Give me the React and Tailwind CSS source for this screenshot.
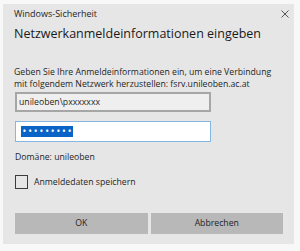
export default function App() {
  return (
    <div className="w-[300px] h-[251px] bg-[#f8f8f8] pt-[4px] pl-[3px]" style={{ fontFamily: '"Open Sans", "Noto Sans", sans-serif' }}>
      <div className="w-[291px] h-[240px] bg-[#e6e6e6] flex flex-col px-[11px] text-[#1f1f1f]">
        <div className="flex items-center justify-between h-[20px]">
          <span className="text-[9px] leading-[12px]">Windows-Sicherheit</span>
          <svg width="8" height="8" viewBox="0 0 8 8" className="-mr-[6px] -mt-[1px]">
            <path d="M0.5 0.5 L7.5 7.5 M7.5 0.5 L0.5 7.5" stroke="#555" strokeWidth="1" />
          </svg>
        </div>
        <h1 className="text-[12.5px] leading-[14px] mt-[3px] text-[#1a1a1a]">Netzwerkanmeldeinformationen eingeben</h1>
        <p className="text-[8.7px] leading-[12px] mt-[25px]">
          Geben Sie Ihre Anmeldeinformationen ein, um eine Verbindung
          <br />
          mit folgendem Netzwerk herzustellen: fsrv.unileoben.ac.at
        </p>
        <div className="mt-[2px] ml-[1px] w-[196px] h-[20px] border-2 border-[#a6a6a6] bg-[#efefef] flex items-center px-[2px] text-[8.7px] leading-[12px]">
          unileoben\pxxxxxxx
        </div>
        <div className="mt-[9px] ml-[1px] w-[196px] h-[21px] border-[1.5px] border-[#86b6e2] bg-white flex items-center px-[5px]">
          <span className="bg-[#0a64c8] text-white text-[10px] leading-[11px] h-[11px] flex items-center pl-[1.5px] tracking-[1.9px]">•••••••••</span>
        </div>
        <div className="mt-[9px] text-[8.7px] leading-[12px] ml-[1px]">Domäne: unileoben</div>
        <div className="mt-[12px] flex items-center h-[14px] ml-[1px]">
          <div className="w-[13px] h-[14px] border-[1.5px] border-[#3c3c3c]"></div>
          <span className="ml-[6px] text-[8.7px] leading-[12px]">Anmeldedaten speichern</span>
        </div>
        <div className="mt-[24px] ml-[1px] flex gap-[3px]">
          <button className="w-[133px] h-[21px] bg-[#b8b8b8] text-[8.7px] text-[#1f1f1f]">OK</button>
          <button className="w-[133px] h-[21px] bg-[#b8b8b8] text-[8.7px] text-[#1f1f1f]">Abbrechen</button>
        </div>
      </div>
    </div>
  );
}
